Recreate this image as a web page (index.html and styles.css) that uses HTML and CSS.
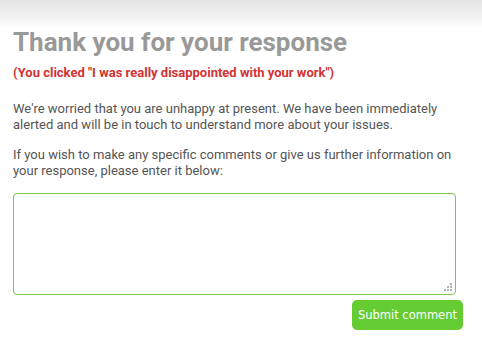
FILE: index.html
```html
<!DOCTYPE html>
<html lang="en">
  <head>
    <meta charset="UTF-8" />
    <meta name="viewport" content="width=device-width, initial-scale=1.0" />
    <title>Thank you</title>
    <link rel="stylesheet" href="styles.css">
  </head>
  <body>
    <div class="top-shade"></div>
    <div class="content">
      <h1 class="title">Thank you for your response</h1>
      <p class="clicked">(You clicked "I was really disappointed with your work")</p>

      <p class="text">We're worried that you are unhappy at present. We have been immediately alerted and will be in touch to understand more about your issues.</p>
      <p class="text">If you wish to make any specific comments or give us further information on your response, please enter it below:</p>

      <form class="comment-form">
        <div class="box-wrap">
          <textarea class="comment-box"></textarea>
          <svg class="grip" width="9" height="9" viewBox="0 0 9 9">
            <rect x="7" y="1" width="2" height="2" fill="#b5b5b5" />
            <rect x="4" y="4" width="2" height="2" fill="#b5b5b5" />
            <rect x="7" y="4" width="2" height="2" fill="#b5b5b5" />
            <rect x="1" y="7" width="2" height="2" fill="#b5b5b5" />
            <rect x="4" y="7" width="2" height="2" fill="#b5b5b5" />
            <rect x="7" y="7" width="2" height="2" fill="#b5b5b5" />
          </svg>
        </div>
        <div class="actions">
          <button type="button" class="submit">Submit comment</button>
        </div>
      </form>
    </div>
  </body>
</html>
```

FILE: styles.css
```css
*,
*::before,
*::after {
  box-sizing: border-box;
  margin: 0;
  padding: 0;
}

body {
  background-color: white;
  font-family: Roboto, "Liberation Sans", sans-serif;
  color: #555555;
  width: 100%;
  height: 100vh;
  overflow: hidden;
}

.top-shade {
  height: 27px;
  background: linear-gradient(to bottom, #e4e4e4, #f6f6f6 80%, #ffffff);
}

.content {
  padding: 0 19px 0 13px;
}

.title {
  font-size: 26px;
  font-weight: 700;
  color: #999999;
  line-height: 30px;
}

.clicked {
  font-size: 13px;
  font-weight: 700;
  color: #d33333;
  margin-top: 8px;
  line-height: 16px;
}

.text {
  font-size: 13px;
  line-height: 16px;
  margin-top: 20px;
}

.text + .text {
  margin-top: 14px;
}

.comment-form {
  margin-top: 14px;
  display: flex;
  flex-direction: column;
}

.box-wrap {
  position: relative;
  width: 443px;
  height: 102px;
}

.comment-box {
  display: block;
  width: 100%;
  height: 100%;
  border: 1px solid #7cc84a;
  border-radius: 4px;
  outline: none;
  resize: none;
}

.grip {
  position: absolute;
  right: 4px;
  bottom: 4px;
}

.actions {
  display: flex;
  justify-content: flex-end;
  margin-top: 5px;
  width: 450px;
}

.submit {
  background-color: #66cc33;
  color: white;
  border: none;
  border-radius: 5px;
  font-family: "DejaVu Sans", Verdana, sans-serif;
  font-size: 11.5px;
  height: 30px;
  padding: 0 6px;
}
```
